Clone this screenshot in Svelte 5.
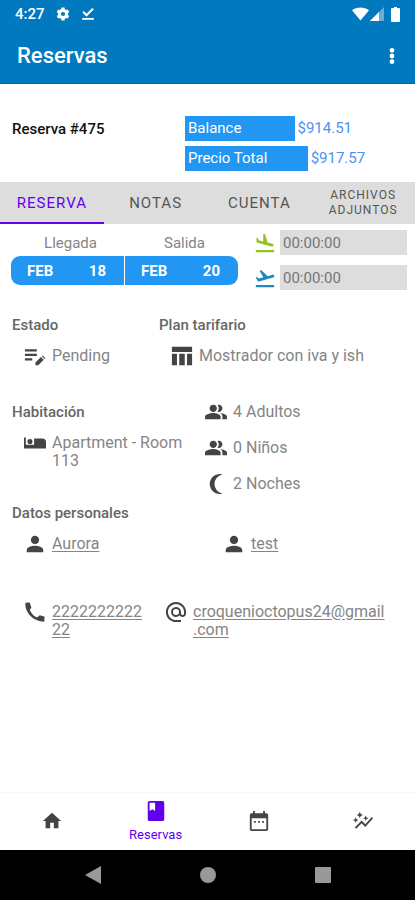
<script>
    const tabs = ['Reserva', 'Notas', 'Cuenta', 'Archivos adjuntos'];
    let activeTab = $state(0);
    let arrivalTime = $state('00:00:00');
    let departureTime = $state('00:00:00');

    const guests = [
        { icon: 'people', label: '4 Adultos' },
        { icon: 'people', label: '0 Niños' },
        { icon: 'moon', label: '2 Noches' }
    ];

    const nav = [
        { icon: 'home', label: 'Inicio' },
        { icon: 'book', label: 'Reservas', active: true },
        { icon: 'calendar', label: 'Calendario' },
        { icon: 'graph', label: 'Reportes' }
    ];

    const icons = {
        settings: 'M20.5 13.5a8 8 0 0 0 0-3l2.3-1.8-2.7-4.6-2.7 1.1a8 8 0 0 0-2.4-1.4L14.6 1H9.4L9 3.8a8 8 0 0 0-2.4 1.4L3.9 4.1 1.2 8.7l2.3 1.8a8 8 0 0 0 0 3l-2.3 1.8 2.7 4.6 2.7-1.1A8 8 0 0 0 9 20.2l.4 2.8h5.2l.4-2.8a8 8 0 0 0 2.4-1.4l2.7 1.1 2.7-4.6zM12 15.6a3.6 3.6 0 1 1 0-7.2 3.6 3.6 0 0 1 0 7.2z',
        done: 'M22 4 19.5 1.5 9.5 11.5 5 7 2.5 9.5l7 7zM2 19h20v3H2z',
        more: 'M12 8.4a2.6 2.6 0 1 0 0-5.2 2.6 2.6 0 0 0 0 5.2zm0 1a2.6 2.6 0 1 0 0 5.2 2.6 2.6 0 0 0 0-5.2zm0 6.2a2.6 2.6 0 1 0 0 5.2 2.6 2.6 0 0 0 0-5.2z',
        landing: 'M2 19.5h20V22H2v-2.5zm7.68-6.23 4.35 1.16 5.31 1.42c.8.21 1.62-.26 1.84-1.06.21-.8-.26-1.62-1.06-1.84l-5.31-1.42-2.76-9.02L10.12 2v8.28L5.15 8.95l-.93-2.32-1.45-.39v5.17l1.6.43 5.31 1.43z',
        takeoff: 'M2 19.5h20V22H2v-2.5zm20.07-9.86c-.21-.8-1.04-1.28-1.84-1.06L14.92 10l-6.9-6.43-1.93.51 4.14 7.17-4.97 1.33-1.97-1.54-1.45.39 1.82 3.16.77 1.33 1.6-.43 5.31-1.42 4.35-1.16L21 11.49c.81-.23 1.28-1.05 1.07-1.85z',
        note: 'M1 9.5h13V12H1V9.5zM1 7h13V4.5H1V7zm0 10h8v-2.5H1V17zm18.5-4.8.8-.8 3 3-.8.8zm-1 1 3 3-6 6h-3v-3z',
        table: 'M1 2h22v5.5H1zM1 9.5h5.5V22H1zM9 9.5h6V22H9zM17.5 9.5H23V22h-5.5z',
        bed: 'M0 6h2v8h9V7h9a4 4 0 0 1 4 4v7H0zM6.5 7.5a2.8 2.8 0 1 0 0 5.6 2.8 2.8 0 0 0 0-5.6z',
        people: 'M16.67 13.13C18.04 14.06 19 15.32 19 17v3h5v-3c0-2.18-4.57-3.47-7.33-3.87zM15 12c2.21 0 4-1.79 4-4s-1.79-4-4-4c-.47 0-.91.1-1.33.24C14.5 5.27 15 6.58 15 8s-.5 2.73-1.33 3.76c.42.14.86.24 1.33.24zM9 12c2.21 0 4-1.79 4-4s-1.79-4-4-4-4 1.79-4 4 1.79 4 4 4zm0 1c-2.67 0-9 1.34-9 4v3h17v-3c0-2.66-5.33-4-8-4z',
        moon: 'M19 1.5A10.9 10.9 0 1 0 19 22.5 10.7 10.7 0 0 1 19 1.5z',
        person: 'M12 12c2.5 0 4.5-2 4.5-4.5S14.5 3 12 3 7.5 5 7.5 7.5 9.5 12 12 12zm0 2c-3 0-9 1.5-9 4.5V21h18v-2.5c0-3-6-4.5-9-4.5z',
        phone: 'M6.2 1.5 1.5 2c-.6 11.5 9 20.5 20.5 20.5l.5-5.2-5.3-1.8-3 2.6A17 17 0 0 1 6.3 9.7L8 7z',
        at: 'M12 1C5.9 1 1 5.9 1 12s4.9 11 11 11h5.5v-2.2H12c-4.8 0-8.8-4-8.8-8.8S7.2 3.2 12 3.2s8.8 4 8.8 8.8v1.6c0 .9-.8 1.7-1.7 1.7s-1.6-.8-1.6-1.7V12a5.5 5.5 0 1 0-1.6 3.9c.7 1 1.9 1.6 3.2 1.6 2.2 0 3.9-1.8 3.9-3.9V12C23 5.9 18.1 1 12 1zm0 14.3a3.3 3.3 0 1 1 0-6.6 3.3 3.3 0 0 1 0 6.6z',
        home: 'M10 20v-6h4v6h5v-8h3L12 3 2 12h3v8z',
        book: 'M19 1H5c-1.1 0-2 .9-2 2v18c0 1.1.9 2 2 2h14c1.1 0 2-.9 2-2V3c0-1.1-.9-2-2-2zM5 3h6v9l-3-1.8L5 12V3z',
        calendar: 'M5.5 1h2v2.5h9V1h2v2.5H20a2 2 0 0 1 2 2V21a2 2 0 0 1-2 2H4a2 2 0 0 1-2-2V5.5a2 2 0 0 1 2-2h1.5zM4 9v12h16V9zM6.5 12h2v2h-2zM11 12h2v2h-2zM15.5 12h2v2h-2z',
        graph: 'M14.06 9.94 12 9l2.06-.94L15 6l.94 2.06L18 9l-2.06.94L15 12l-.94-2.06zM4 14l.94-2.06L7 11l-2.06-.94L4 8l-.94 2.06L1 11l2.06.94L4 14zm4.5-5 1.09-2.41L12 5.5 9.59 4.41 8.5 2 7.41 4.41 5 5.5l2.41 1.09L8.5 9zm-4 11.5 6-6.01 4 4L23 8.93l-1.41-1.41-7.09 7.97-4-4L3 19l1.5 1.5z'
    };
</script>

{#snippet icon(name)}
    <svg class="icon {name}" viewBox="0 0 24 24" aria-hidden="true">
        <path d={icons[name]} fill-rule="evenodd" />
    </svg>
{/snippet}

<div class="app">
    <div class="status">
        <span class="clock">4:27</span>
        {@render icon('settings')}
        {@render icon('done')}
        <span class="signals">
            <svg class="wifi" viewBox="0 0 18 14"><path d="M0 3C5-1 13-1 18 3L9 14z" /></svg>
            <svg class="cell" viewBox="0 0 14 14">
                <path d="M14 0v14H0z" opacity="0.4" />
                <path d="M9 5v9H0z" />
            </svg>
            <svg class="battery" viewBox="0 0 9 15"><path d="M3 0h3v1h2q1 0 1 1v12q0 1-1 1H1q-1 0-1-1V2q0-1 1-1h2z" /></svg>
        </span>
    </div>

    <header>
        <h1>Reservas</h1>
        <button class="menu" aria-label="Más opciones">{@render icon('more')}</button>
    </header>

    <section class="summary">
        <h2>Reserva #475</h2>
        <dl>
            <div><dt class="balance">Balance</dt><dd>$914.51</dd></div>
            <div><dt class="total">Precio Total</dt><dd>$917.57</dd></div>
        </dl>
    </section>

    <div class="tabs" role="tablist">
        {#each tabs as tab, i}
            <button
                role="tab"
                class:active={activeTab === i}
                class:small={tab.length > 10}
                aria-selected={activeTab === i}
                onclick={() => (activeTab = i)}
            >{tab}</button>
        {/each}
    </div>

    <main>
        <section class="stay">
            <div class="dates">
                <span class="label">Llegada</span>
                <span class="label">Salida</span>
                <button class="date first"><span>FEB</span><span>18</span></button>
                <button class="date last"><span>FEB</span><span>20</span></button>
            </div>
            <div class="times">
                <label>{@render icon('landing')}<input type="text" aria-label="Hora de llegada" bind:value={arrivalTime}></label>
                <label>{@render icon('takeoff')}<input type="text" aria-label="Hora de salida" bind:value={departureTime}></label>
            </div>
        </section>

        <section class="plan">
            <div>
                <h3>Estado</h3>
                <p class="item">{@render icon('note')}<span>Pending</span></p>
            </div>
            <div>
                <h3>Plan tarifario</h3>
                <p class="item">{@render icon('table')}<span>Mostrador con iva y ish</span></p>
            </div>
        </section>

        <section class="room">
            <div>
                <h3>Habitación</h3>
                <p class="item">{@render icon('bed')}<span>Apartment - Room 113</span></p>
            </div>
            <div class="guests">
                {#each guests as guest}
                    <p class="item">{@render icon(guest.icon)}<span>{guest.label}</span></p>
                {/each}
            </div>
        </section>

        <section class="personal">
            <h3>Datos personales</h3>
            <div class="names">
                <p class="item">{@render icon('person')}<a href="#nombre">Aurora</a></p>
                <p class="item">{@render icon('person')}<a href="#apellido">test</a></p>
            </div>
            <div class="contact">
                <p class="item">{@render icon('phone')}<a href="tel:222222222222">222222222222</a></p>
                <p class="item">{@render icon('at')}<a href="mailto:croquenioctopus24@gmail.com">croquenioctopus24@gmail<wbr>.com</a></p>
            </div>
        </section>
    </main>

    <nav class="bottom">
        {#each nav as item}
            <button class:active={item.active} aria-label={item.label}>
                {@render icon(item.icon)}
                {#if item.active}<span>{item.label}</span>{/if}
            </button>
        {/each}
    </nav>

    <div class="system">
        <button aria-label="Atrás"><svg viewBox="0 0 18 18"><path d="M17 0v18L1 9z" /></svg></button>
        <button aria-label="Pantalla de inicio"><svg viewBox="0 0 18 18"><circle cx="9" cy="9" r="8" /></svg></button>
        <button aria-label="Recientes"><svg viewBox="0 0 18 18"><rect x="1" y="1" width="16" height="16" rx="1" /></svg></button>
    </div>
</div>

<style>
    :global(body) {
        background: white;
    }

    .app {
        display: flex;
        flex-direction: column;
        min-height: 100vh;
        font-family: Roboto, "Liberation Sans", sans-serif;
        font-size: 16px;
        line-height: 18px;
        color: #858585;
    }

    h1, h2, h3, p, dl, dd {
        margin: 0;
    }

    button {
        border: none;
        padding: 0;
        background: none;
        font-family: inherit;
        cursor: pointer;
    }

    .icon {
        width: 22px;
        height: 22px;
        flex-shrink: 0;
        fill: #444;
    }

    .status {
        display: flex;
        align-items: center;
        gap: 11px;
        height: 28px;
        padding: 0 15px;
        background: #0079bf;
        color: white;
    }

    .status svg {
        fill: white;
    }

    .status .icon {
        width: 14px;
        height: 14px;
    }

    .clock {
        font-size: 15px;
        font-weight: 500;
    }

    .signals {
        display: flex;
        align-items: center;
        gap: 1px;
        margin-left: auto;
    }

    .wifi {
        width: 17px;
        height: 14px;
    }

    .cell {
        width: 14px;
        height: 14px;
    }

    .battery {
        width: 9px;
        height: 15px;
        margin-left: 6px;
    }

    header {
        display: flex;
        align-items: center;
        justify-content: space-between;
        height: 55px;
        padding: 0 12px 0 17px;
        background: #0079bf;
        border-bottom: 1px solid #0068ad;
        color: white;
    }

    h1 {
        font-size: 22px;
        line-height: 26px;
        font-weight: 500;
    }

    .menu {
        display: flex;
    }

    .menu .icon {
        fill: white;
    }

    .summary {
        display: grid;
        grid-template-columns: 173fr 219fr;
        padding: 32px 11px 11px 12px;
    }

    h2 {
        font-size: 15px;
        line-height: 26px;
        font-weight: 500;
        color: #111;
    }

    dl {
        display: flex;
        flex-direction: column;
        gap: 5px;
    }

    dl div {
        display: flex;
        gap: 3px;
        line-height: 25px;
        font-size: 15px;
    }

    dt {
        box-sizing: border-box;
        padding-left: 3px;
        background: #2196f3;
        color: white;
    }

    .balance {
        width: 50%;
    }

    .total {
        width: 56%;
    }

    dd {
        color: #4c93ee;
    }

    .tabs {
        display: grid;
        grid-template-columns: repeat(4, 1fr);
        height: 42px;
        background: #ddd;
    }

    .tabs button {
        padding: 2px 8px 0;
        border-bottom: 2px solid transparent;
        color: #555;
        font-size: 15px;
        line-height: 15px;
        letter-spacing: 1px;
        text-transform: uppercase;
    }

    .tabs .small {
        font-size: 12px;
    }

    .tabs .active {
        border-color: #6200ee;
        color: #6200ee;
    }

    main {
        flex: 1;
    }

    .stay {
        display: grid;
        grid-template-columns: minmax(0, 227fr) minmax(0, 153fr);
        gap: 16px;
        padding: 6px 8px 0 11px;
    }

    .dates {
        display: grid;
        grid-template-columns: 1fr 1fr;
        grid-template-rows: 26px 29px;
        column-gap: 1px;
    }

    .label {
        padding-left: 6px;
        font-size: 15px;
        line-height: 26px;
        text-align: center;
    }

    .date {
        display: flex;
        align-items: center;
        justify-content: space-between;
        padding: 0 18px 0 16px;
        background: #2196f3;
        color: white;
        font-size: 15px;
        font-weight: 700;
    }

    .first {
        border-radius: 9px 0 0 9px;
    }

    .last {
        border-radius: 0 9px 9px 0;
    }

    .times {
        display: flex;
        flex-direction: column;
        gap: 10px;
    }

    .times label {
        display: flex;
        align-items: center;
        gap: 4px;
    }

    .landing {
        fill: #94c11f;
    }

    .takeoff {
        fill: #1e88c0;
    }

    input {
        flex: 1;
        min-width: 0;
        height: 25px;
        box-sizing: border-box;
        padding: 0 3px;
        border: none;
        background: #ddd;
        color: #757575;
        font-family: inherit;
        font-size: 15px;
    }

    .plan, .room, .personal {
        padding: 0 12px;
    }

    h3 {
        font-size: 15px;
        line-height: 18px;
        font-weight: 500;
        color: #666;
    }

    .item {
        display: flex;
        gap: 6px;
        padding-left: 12px;
    }

    .item .icon {
        margin: -2px 0;
    }

    .plan {
        display: grid;
        grid-template-columns: 147fr 244fr;
        padding-top: 26px;
    }

    .plan h3, .room h3 {
        margin-bottom: 13px;
    }

    .room {
        display: grid;
        grid-template-columns: 181fr 210fr;
        padding-top: 38px;
    }

    .guests {
        display: flex;
        flex-direction: column;
        gap: 18px;
    }

    .personal {
        padding-top: 11px;
    }

    .names {
        display: grid;
        grid-template-columns: 199fr 192fr;
        padding-top: 13px;
    }

    .contact {
        display: grid;
        grid-template-columns: 141fr 250fr;
        padding-top: 50px;
    }

    .contact .item {
        padding-right: 10px;
    }

    a {
        color: inherit;
        overflow-wrap: anywhere;
        text-underline-offset: 2px;
    }

    .bottom {
        display: grid;
        grid-template-columns: repeat(4, 1fr);
        height: 58px;
        padding-bottom: 1px;
        border-top: 1px solid #f7f7f7;
        box-sizing: border-box;
    }

    .bottom button {
        display: flex;
        flex-direction: column;
        align-items: center;
        justify-content: center;
        gap: 5px;
        color: #6200ee;
        font-size: 13px;
        line-height: 16px;
    }

    .bottom .active .icon {
        fill: #6200ee;
    }

    .system {
        display: flex;
        align-items: center;
        justify-content: center;
        gap: 97px;
        height: 50px;
        background: black;
    }

    .system button {
        display: flex;
    }

    .system svg {
        width: 18px;
        height: 18px;
        fill: #999;
    }
</style>
